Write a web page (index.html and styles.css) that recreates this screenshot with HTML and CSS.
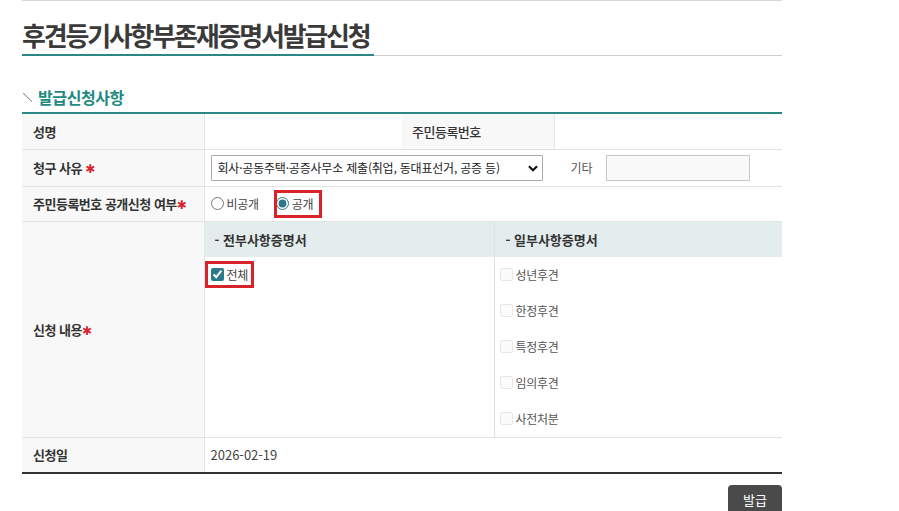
FILE: index.html
```html
<!DOCTYPE html>
<html lang="ko">
<head>
    <meta charset="UTF-8">
    <meta name="viewport" content="width=device-width, initial-scale=1.0">
    <title>후견등기사항부존재증명서발급신청</title>
    <link rel="stylesheet" href="styles.css">
</head>
<body>
    <div class="page">
        <div class="title-box">
            <h2 class="page-title">후견등기사항부존재증명서발급신청</h2>
        </div>

        <h3 class="section-title"><span class="slash"></span>발급신청사항</h3>

        <table class="form-table">
            <colgroup>
                <col class="c-label">
                <col class="c-value">
                <col class="c-label2">
                <col>
            </colgroup>
            <tr class="row-name">
                <th>성명</th>
                <td></td>
                <th class="sub-th">주민등록번호</th>
                <td></td>
            </tr>
            <tr class="row-reason">
                <th>청구 사유 <span class="req">✱</span></th>
                <td colspan="3">
                    <div class="reason-line">
                        <span class="select-wrap">
                            <select class="reason-select">
                                <option>회사·공동주택·공증사무소 제출(취업, 동대표선거, 공증 등)</option>
                            </select>
                            <svg class="select-arrow" width="10" height="7" viewBox="0 0 10 7"><path d="M1 1.2 L5 5.2 L9 1.2" fill="none" stroke="#111" stroke-width="2.2"/></svg>
                        </span>
                        <span class="etc-label">기타</span>
                        <input type="text" class="etc-input">
                    </div>
                </td>
            </tr>
            <tr class="row-open">
                <th>주민등록번호 공개신청 여부<span class="req">✱</span></th>
                <td colspan="3">
                    <div class="radio-line">
                        <label class="opt"><input type="radio" name="open">비공개</label>
                        <label class="opt marked"><input type="radio" name="open" checked>공개</label>
                    </div>
                </td>
            </tr>
            <tr class="row-content">
                <th>신청 내용<span class="req">✱</span></th>
                <td colspan="3" class="inner-cell">
                    <div class="cert-grid">
                        <div class="cert-head">- 전부사항증명서</div>
                        <div class="cert-head right">- 일부사항증명서</div>
                        <div class="cert-col">
                            <div class="cert-item"><label class="opt marked"><input type="checkbox" checked>전체</label></div>
                        </div>
                        <div class="cert-col right">
                            <div class="cert-item"><label class="opt off"><input type="checkbox" disabled>성년후견</label></div>
                            <div class="cert-item"><label class="opt off"><input type="checkbox" disabled>한정후견</label></div>
                            <div class="cert-item"><label class="opt off"><input type="checkbox" disabled>특정후견</label></div>
                            <div class="cert-item"><label class="opt off"><input type="checkbox" disabled>임의후견</label></div>
                            <div class="cert-item"><label class="opt off"><input type="checkbox" disabled>사전처분</label></div>
                        </div>
                    </div>
                </td>
            </tr>
            <tr class="row-date">
                <th>신청일</th>
                <td colspan="3" class="date">2026-02-19</td>
            </tr>
        </table>

        <div class="btn-area">
            <button class="btn-issue">발급</button>
        </div>
    </div>
</body>
</html>
```

FILE: styles.css
```css
* {
    margin: 0;
    padding: 0;
    box-sizing: border-box;
}

body {
    font-family: "Noto Sans CJK KR", "Noto Sans", "DejaVu Sans", sans-serif;
    color: #333;
    background: #fff;
    overflow: hidden;
}

.page {
    width: 760px;
    margin-left: 22px;
    border-top: 1px solid #d6d6d6;
}

/* page title */
.title-box {
    display: flex;
    height: 55px;
    border-bottom: 1px solid #cfcfcf;
}

.page-title {
    margin-top: 17px;
    height: 38px;
    font-size: 26px;
    line-height: 34px;
    font-weight: 700;
    letter-spacing: -2.2px;
    color: #3a3a3a;
    border-bottom: 2px solid #2a8783;
    padding-right: 4px;
}

/* section heading */
.section-title {
    display: flex;
    align-items: center;
    margin-top: 29px;
    height: 24px;
    margin-bottom: 3px;
    font-size: 16px;
    font-weight: 700;
    letter-spacing: -0.4px;
    color: #1d8a80;
}

.slash {
    width: 9px;
    height: 9px;
    margin: 0 6px 0 1px;
    background: linear-gradient(to top right, transparent 44%, #999 48%, #999 53%, transparent 57%);
}

/* form table */
.form-table {
    width: 760px;
    border-collapse: collapse;
    table-layout: fixed;
    border-top: 2px solid #2a8783;
    border-bottom: 2px solid #333;
    font-size: 12px;
}

.c-label { width: 182px; }
.c-value { width: 198px; }
.c-label2 { width: 152px; }

.form-table th,
.form-table td {
    border-bottom: 1px solid #e3e3e3;
    height: 36px;
    vertical-align: middle;
    text-align: left;
}

.form-table th {
    background: #f8f8f8;
    padding-left: 11px;
    font-size: 13px;
    font-weight: 700;
    letter-spacing: -0.5px;
    color: #333;
    border-right: 1px solid #e6e6e6;
}

.form-table th.sub-th {
    padding-left: 10px;
    font-weight: 500;
}

.form-table td {
    padding: 0 6px;
}

.row-reason th,
.row-reason td {
    height: 37px;
}

.row-open th,
.row-open td {
    height: 35px;
}

.req {
    color: #d8232a;
    font-family: "DejaVu Sans", sans-serif;
    font-size: 12px;
}

/* reason select */
.reason-line {
    display: flex;
    align-items: center;
}

.select-wrap {
    position: relative;
    display: inline-block;
}

.reason-select {
    appearance: none;
    width: 332px;
    height: 26px;
    padding: 0 24px 0 6px;
    border: 1px solid #a9a9a9;
    border-radius: 1px;
    background: #fff;
    font-family: inherit;
    font-size: 12px;
    color: #222;
    letter-spacing: -0.2px;
}

.select-arrow {
    position: absolute;
    right: 5px;
    top: 10px;
}

.etc-label {
    margin-left: 28px;
    font-size: 12px;
    color: #555;
}

.etc-input {
    width: 144px;
    height: 26px;
    margin-left: 13px;
    border: 1px solid #c8c8c8;
    background: #f9f9f9;
}

/* radios and checkboxes */
.radio-line {
    display: flex;
    align-items: center;
}

.opt {
    display: inline-flex;
    align-items: center;
    font-size: 12px;
    color: #444;
    letter-spacing: -0.3px;
}

.opt input {
    width: 13px;
    height: 13px;
    margin: 0 3px 0 0;
    accent-color: #2a7b8a;
}

.opt.marked {
    outline: 3px solid #d8232a;
    outline-offset: -3px;
    padding: 0 6px;
    height: 27px;
}

.radio-line .opt.marked {
    margin-left: 15px;
    padding: 0 9px 0 2px;
    height: 28px;
}

.opt.off {
    color: #555;
}

.opt.off input {
    opacity: 0.5;
}

/* certificate choices */
.form-table td.inner-cell {
    padding: 0;
    height: 216px;
}

.cert-grid {
    display: grid;
    grid-template-columns: 289px 1fr;
    grid-template-rows: 35px 1fr;
    height: 215px;
}

.cert-head {
    background: #e3eded;
    padding-left: 10px;
    display: flex;
    align-items: center;
    font-size: 13px;
    font-weight: 700;
    color: #333;
}

.cert-head.right {
    border-left: 1px solid #e0e0e0;
    padding-left: 11px;
}

.cert-col.right {
    border-left: 1px solid #e0e0e0;
    padding-left: 5px;
}

.cert-col .cert-item {
    height: 36px;
    display: flex;
    align-items: center;
}

.form-table td.date {
    padding-left: 6px;
    font-size: 13px;
    color: #444;
}

/* issue button */
.btn-area {
    display: flex;
    justify-content: flex-end;
    margin-top: 11px;
}

.btn-issue {
    width: 54px;
    height: 34px;
    border: none;
    border-radius: 4px;
    background: #4a4a4a;
    color: #fff;
    font-family: inherit;
    font-size: 13px;
    padding-bottom: 6px;
}
```
